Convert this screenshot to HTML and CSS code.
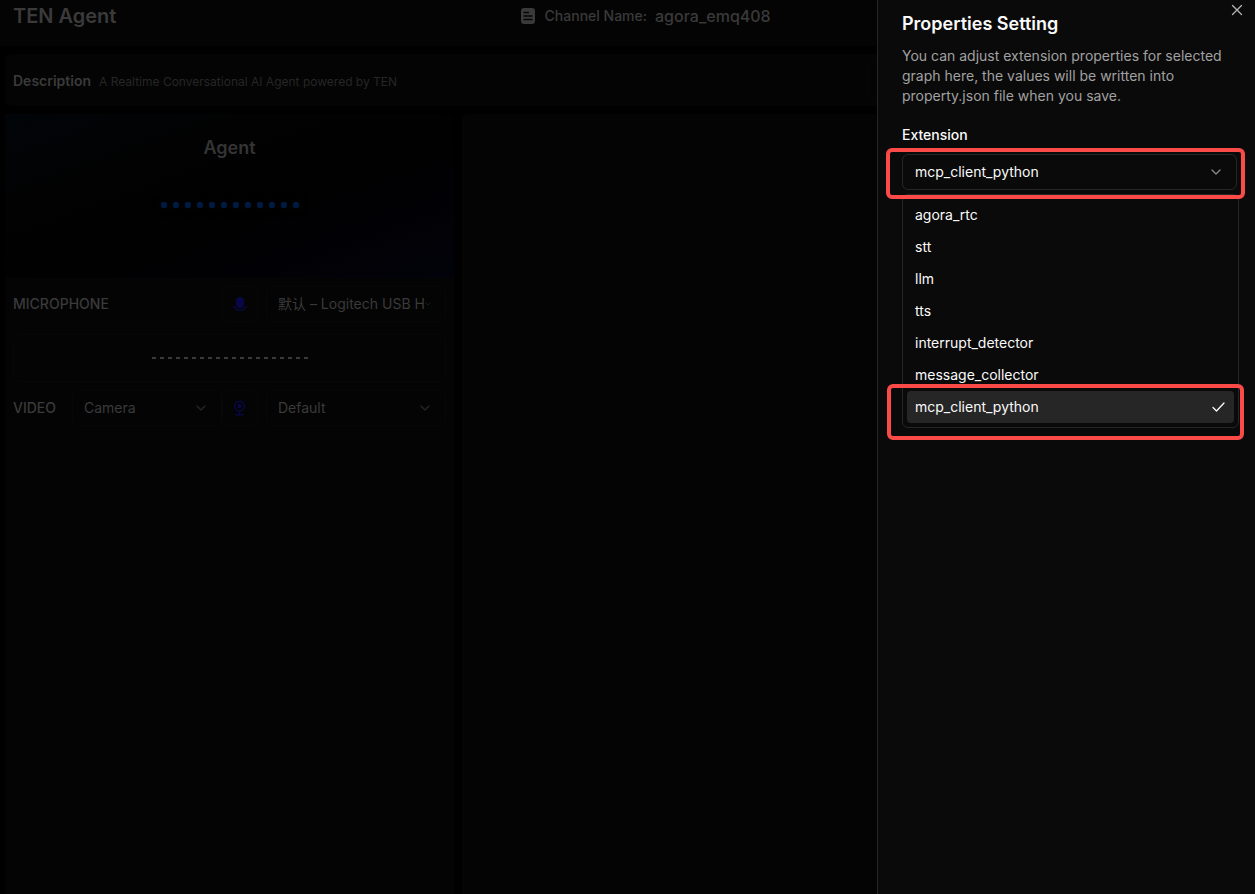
FILE: index.html
```html
<!DOCTYPE html>
<html lang="en">
<head>
<meta charset="utf-8">
<meta name="viewport" content="width=device-width, initial-scale=1">
<title>TEN Agent</title>
<link rel="stylesheet" href="styles.css">
</head>
<body>
<div class="app">
  <header class="topbar">
    <h1 class="brand">TEN Agent</h1>
    <div class="channel">
      <svg class="channel-icon" width="14" height="16" viewBox="0 0 14 16" aria-hidden="true"><rect width="14" height="16" rx="3" fill="currentColor"/><path d="M3 4.500h4.500M3 8h8M3 11.500h8" stroke="#040404" stroke-width="1.300" stroke-linecap="round"/></svg>
      <span class="channel-label">Channel Name:</span>
      <span class="channel-name">agora_emq408</span>
    </div>
  </header>

  <section class="description">
    <h2 class="description-title">Description</h2>
    <p class="description-text">A Realtime Conversational AI Agent powered by TEN</p>
    <div class="graph-slot"></div>
  </section>

  <main class="workspace">
    <section class="rtc">
      <div class="agent">
        <h2 class="agent-title">Agent</h2>
        <div class="dots" aria-hidden="true"><i></i><i></i><i></i><i></i><i></i><i></i><i></i><i></i><i></i><i></i><i></i><i></i></div>
      </div>
      <div class="devices">
        <div class="device-row">
          <label class="device-label" for="mic">MICROPHONE</label>
          <button class="icon-button" type="button" aria-label="Mute microphone">
            <svg width="16" height="16" viewBox="0 0 16 16" aria-hidden="true"><rect x="4" y="1" width="8" height="11" rx="4" fill="currentColor"/><path d="M1.800 10.500c1.400 2.600 3.600 3.800 6.200 3.800s4.800-1.200 6.200-3.800" fill="none" stroke="currentColor" stroke-width="1.400" stroke-linecap="round"/></svg>
          </button>
          <div class="picker">
            <select id="mic" class="select"><option>默认 – Logitech USB Headset</option></select>
            <svg class="chevron chevron-small" viewBox="0 0 16 16" aria-hidden="true"><path d="M4 6l4 4 4-4"/></svg>
          </div>
        </div>
        <div class="wave" aria-hidden="true"><i></i><i></i><i></i><i></i><i></i><i></i><i></i><i></i><i></i><i></i><i></i><i></i><i></i><i></i><i></i><i></i><i></i><i></i><i></i><i></i></div>
        <div class="device-row">
          <label class="device-label" for="source">VIDEO</label>
          <div class="picker picker-source">
            <select id="source" class="select"><option>Camera</option></select>
            <svg class="chevron" viewBox="0 0 16 16" aria-hidden="true"><path d="M4 6l4 4 4-4"/></svg>
          </div>
          <button class="icon-button" type="button" aria-label="Toggle camera">
            <svg width="16" height="16" viewBox="0 0 16 16" fill="none" stroke="currentColor" aria-hidden="true"><circle cx="7.500" cy="6.200" r="4.900" stroke-width="1.400"/><circle cx="7.500" cy="6.200" r="2.100" fill="currentColor" stroke="none"/><path d="M7.500 11.500v3M4 14.700h7" stroke-width="1.400" stroke-linecap="round"/></svg>
          </button>
          <div class="picker">
            <select class="select" aria-label="Camera device"><option>Default</option></select>
            <svg class="chevron" viewBox="0 0 16 16" aria-hidden="true"><path d="M4 6l4 4 4-4"/></svg>
          </div>
        </div>
      </div>
    </section>
    <section class="chat"></section>
  </main>
</div>

<aside class="sheet" role="dialog" aria-labelledby="sheet-title">
  <button class="close" type="button" aria-label="Close">
    <svg width="16" height="16" viewBox="0 0 16 16" aria-hidden="true"><path d="M3.500 3.500l9 9M12.500 3.500l-9 9" stroke="currentColor" stroke-width="1.300" stroke-linecap="round"/></svg>
  </button>
  <h2 class="sheet-title" id="sheet-title">Properties Setting</h2>
  <p class="sheet-text">You can adjust extension properties for selected graph here, the values will be written into property.json file when you save.</p>
  <label class="field-label" for="extension">Extension</label>
  <div class="field">
    <select id="extension" class="select select-field"><option>mcp_client_python</option></select>
    <svg class="chevron" viewBox="0 0 16 16" aria-hidden="true"><path d="M4 6l4 4 4-4"/></svg>
    <ul class="menu" role="listbox" aria-label="Extension">
      <li class="option" role="option">agora_rtc</li>
      <li class="option" role="option">stt</li>
      <li class="option" role="option">llm</li>
      <li class="option" role="option">tts</li>
      <li class="option" role="option">interrupt_detector</li>
      <li class="option" role="option">message_collector</li>
      <li class="option option-selected" role="option" aria-selected="true">mcp_client_python
        <svg width="16" height="16" viewBox="0 0 16 16" aria-hidden="true"><path d="M3 8.500l3.500 3.500 7.500-8" fill="none" stroke="currentColor" stroke-width="1.300" stroke-linecap="round" stroke-linejoin="round"/></svg>
        <span class="mark mark-option"></span>
      </li>
    </ul>
    <span class="mark mark-field"></span>
  </div>
</aside>
</body>
</html>
```
FILE: styles.css
```css
* { box-sizing: border-box; }
body {
  margin: 0;
  background: #000;
  color: #3a3a3a;
  font: 14px/20px Inter, "Noto Sans CJK SC", sans-serif;
}
h1, h2, p, ul { margin: 0; padding: 0; }
ul { list-style: none; }

.app {
  min-height: 100vh;
  display: flex;
  flex-direction: column;
  gap: 8px;
}
.topbar {
  display: flex;
  gap: 16px;
  padding: 2px 13px 16px;
  background: #040404;
}
.brand { flex: 0 0 40%; font-size: 20px; line-height: 28px; font-weight: 600; }
.channel { display: flex; align-items: center; gap: 8px; }
.channel-icon { margin-right: 2px; }
.channel-label { font-weight: 500; }
.channel-name { font-size: 16px; font-weight: 500; }

.description {
  display: flex;
  align-items: center;
  gap: 8px;
  margin-left: 5px;
  padding: 8px;
  background: #040404;
  border-radius: 6px;
}
.description-title { padding-top: 2px; font-size: 14px; font-weight: 600; }
.description-text { flex: 1; padding-top: 3px; font-size: 12px; color: #262626; }
.graph-slot { width: 379px; height: 36px; border: 1px solid #070707; border-radius: 6px; }

.workspace { flex: 1; display: flex; gap: 8px; padding-left: 5px; }
.rtc { flex: 0 0 449px; background: #040404; }
.chat { flex: 1; background: #040404; border-radius: 6px 6px 0 0; }
.agent {
  display: flex;
  flex-direction: column;
  align-items: center;
  gap: 40px;
  height: 164px;
  padding-top: 20px;
  background: linear-gradient(160deg, #010408, #020202 30%, #010101 55%, #02020a);
}
.agent-title { font-size: 18px; line-height: 28px; font-weight: 600; color: #343434; }
.dots { display: flex; gap: 6px; }
.dots i { width: 6px; height: 6px; border-radius: 2px; background: #001b41; box-shadow: 0 0 8px #0c0c0c; }

.devices { display: flex; flex-direction: column; gap: 8px; padding: 8px; }
.device-row { display: flex; align-items: center; gap: 8px; }
.device-label { flex: 1; font-weight: 500; }
.icon-button {
  display: grid;
  place-items: center;
  width: 36px;
  height: 36px;
  padding: 0;
  border: 1px solid #070707;
  border-radius: 6px;
  background: transparent;
  color: #080848;
}
.picker { position: relative; width: 180px; }
.picker-source { width: 150px; margin-right: -8px; }
.select {
  display: block;
  width: 100%;
  height: 36px;
  padding: 0 20px 0 11px;
  border: 1px solid #070707;
  border-radius: 6px;
  appearance: none;
  background: transparent;
  color: inherit;
  font: inherit;
}
.chevron {
  position: absolute;
  top: 10px;
  right: 13px;
  width: 16px;
  height: 16px;
  fill: none;
  stroke: #262626;
  stroke-width: 1.3;
  stroke-linecap: round;
  stroke-linejoin: round;
}
.chevron-small { top: 14px; right: 14px; width: 8px; height: 8px; }
.wave {
  display: flex;
  align-items: center;
  justify-content: center;
  gap: 4px;
  height: 48px;
  margin: 4px 0 0;
  border: 1px solid #070707;
  border-radius: 6px;
}
.wave i { width: 4px; height: 2px; background: #3a3a3a; }

.sheet {
  position: fixed;
  inset: 0 0 0 auto;
  width: 378px;
  padding: 10px 18px 24px 24px;
  border-left: 1px solid #262626;
  background: #0a0a0a;
  color: #fafafa;
}
.close {
  position: absolute;
  top: 2px;
  right: 10px;
  width: 16px;
  height: 16px;
  padding: 0;
  border: 0;
  background: transparent;
  color: #b5b5b5;
}
.close svg { display: block; }
.sheet-title { font-size: 18px; line-height: 28px; font-weight: 600; }
.sheet-text { margin: 8px 0 16px; color: #a1a1a1; }
.field-label { display: block; padding: 3px 0 9px; font-weight: 500; }
.field { position: relative; }
.select-field { padding-left: 12px; border-color: #262626; }
.field > .chevron { stroke: #8a8a8a; }
.menu {
  position: absolute;
  top: 40px;
  left: 0;
  right: -2px;
  padding: 4px;
  border: 1px solid #262626;
  border-radius: 6px;
  background: #0a0a0a;
}
.option { padding: 6px 8px; border-radius: 4px; }
.option-selected {
  position: relative;
  display: flex;
  align-items: center;
  justify-content: space-between;
  background: #262626;
}
.mark { position: absolute; border: 4px solid #fb4b48; border-radius: 6px; pointer-events: none; }
.mark-field { inset: -6px -8px -9px -16px; }
.mark-option { inset: -7px -10px -17px -20px; }
```
